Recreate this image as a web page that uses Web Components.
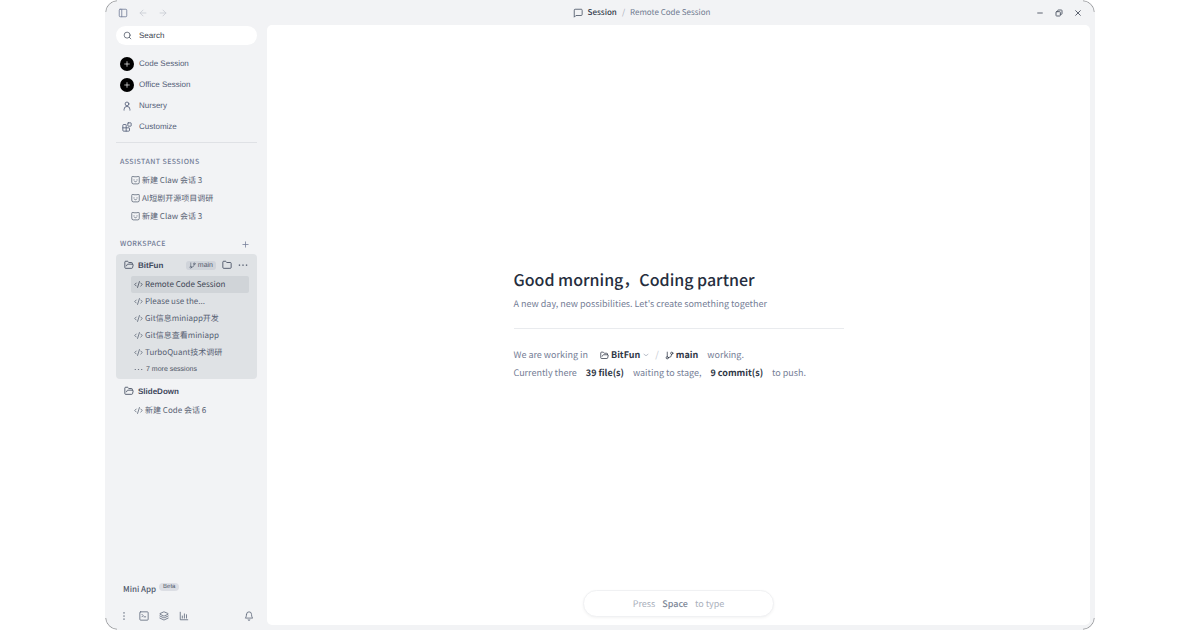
<!DOCTYPE html>
<html lang="en">
<head>
<meta charset="utf-8">
<title>BitFun</title>
<style>
  html, body { margin: 0; height: 100%; background: #fff; }
  body { font-family: "Noto Sans CJK SC", "Noto Sans", sans-serif; color: #5f6980; text-rendering: geometricPrecision; }
</style>
</head>
<body>
<app-window></app-window>
<script>
const ICONS = {
  panel: '<rect x="3" y="3" width="18" height="18" rx="2"/><path d="M9 3v18"/>',
  back: '<path d="M12 19l-7-7 7-7M19 12H5"/>',
  forward: '<path d="M5 12h14M12 5l7 7-7 7"/>',
  search: '<circle cx="11" cy="11" r="8"/><path d="M21 21l-4.3-4.3"/>',
  user: '<circle cx="12" cy="7" r="4.5"/><path d="M5 22v-2a7 7 0 0 1 14 0v2"/>',
  blocks: '<path d="M10 22V7a1 1 0 0 0-1-1H4a2 2 0 0 0-2 2v12a2 2 0 0 0 2 2h12a2 2 0 0 0 2-2v-5a1 1 0 0 0-1-1H2"/><rect x="14" y="2" width="8" height="8" rx="1"/>',
  plus: '<path d="M5 12h14M12 5v14"/>',
  claw: '<path d="M2 3q0-3 3-2l3 1h8l3-1q3-1 3 2v14q0 4-4 4H6q-4 0-4-4z"/><path d="M8 10v1M16 10v1M10 15q2 1 4 0"/>',
  folderOpen: '<path d="M6 14l1.5-2.9A2 2 0 0 1 9.2 10H20a2 2 0 0 1 1.9 2.5l-1.5 6a2 2 0 0 1-2 1.5H4a2 2 0 0 1-2-2V5a2 2 0 0 1 2-2h3.900a2 2 0 0 1 1.700.900l.8 1.200a2 2 0 0 0 1.700.900H18a2 2 0 0 1 2 2v2"/>',
  folder: '<path d="M20 20a2 2 0 0 0 2-2V8a2 2 0 0 0-2-2h-7.900a2 2 0 0 1-1.700-.900L9.600 3.900A2 2 0 0 0 7.900 3H4a2 2 0 0 0-2 2v13a2 2 0 0 0 2 2z"/>',
  branch: '<path d="M6 3v12"/><circle cx="18" cy="6" r="3"/><circle cx="6" cy="18" r="3"/><path d="M18 9a9 9 0 0 1-9 9"/>',
  more: '<path d="M3 12h1M11.500 12h1M20 12h1"/>',
  code: '<path d="M18 16l4-4-4-4M6 8l-4 4 4 4M14.500 4l-5 16"/>',
  dots: '<path d="M12 4v1M12 11.500v1M12 19v1"/>',
  terminal: '<rect x="2" y="2" width="20" height="20" rx="2"/><path d="M7 8l3 3-3 3M12 14h4"/>',
  layers: '<path d="M12.800 2.200a2 2 0 0 0-1.700 0L2.600 6.100a1 1 0 0 0 0 1.800l8.600 3.900a2 2 0 0 0 1.700 0l8.600-3.900a1 1 0 0 0 0-1.800z"/><path d="M22 12l-9.200 4.200a2 2 0 0 1-1.700 0L2 12M22 17l-9.200 4.200a2 2 0 0 1-1.700 0L2 17"/>',
  chart: '<path d="M3 3v18h18M8 17v-5M13 17V7M18 17v-8"/>',
  bell: '<path d="M6 8a6 6 0 0 1 12 0c0 7 3 9 3 9H3s3-2 3-9M10 21a2 2 0 0 0 4 0"/>',
  message: '<path d="M22 16a2 2 0 0 1-2 2H7l-4 4V5a2 2 0 0 1 2-2h15a2 2 0 0 1 2 2z"/>',
  minimize: '<path d="M5 12h14"/>',
  restore: '<rect x="3" y="8" width="13" height="13" rx="2"/><path d="M8 8V5a2 2 0 0 1 2-2h9a2 2 0 0 1 2 2v9a2 2 0 0 1-2 2h-3"/>',
  close: '<path d="M5 5l14 14M19 5L5 19"/>',
  chevron: '<path d="M4 9l8 6 8-6"/>'
};

const BASE = `
  * { box-sizing: border-box; }
  button { font: inherit; color: inherit; text-rendering: inherit; background: none; border: 0; padding: 0; margin: 0; cursor: pointer; text-align: left; white-space: nowrap; display: flex; align-items: center; }
  a { color: inherit; text-decoration: none; white-space: nowrap; }
  h1, h2, p, ul { margin: 0; padding: 0; list-style: none; font-weight: inherit; font-size: inherit; }
`;

function define(name, css, html) {
  customElements.define(name, class extends HTMLElement {
    constructor() {
      super();
      const root = this.attachShadow({ mode: 'open' });
      const template = document.createElement('template');
      template.innerHTML = `<style>${BASE}${css}</style>${typeof html === 'function' ? html(this) : html}`;
      root.append(template.content.cloneNode(true));
    }
  });
}

define('ui-icon', `
  :host { display: inline-flex; flex: none; width: var(--icon, 10px); height: var(--icon, 10px); }
  svg { width: 100%; height: 100%; fill: none; stroke: currentColor; stroke-width: var(--stroke, 2); stroke-linecap: round; stroke-linejoin: round; }
`, el => `<svg viewBox="0 0 24 24" aria-hidden="true">${ICONS[el.getAttribute('name')]}</svg>`);

define('title-bar', `
  :host { display: grid; grid-template-columns: 162px 1fr 79px; align-items: center; height: 25px; }
  .history { display: flex; gap: 10px; padding-left: 13px; color: #c9ccd4; }
  .history button:first-child { color: #76809a; }
  nav { display: flex; justify-content: center; align-items: center; gap: 5px; font-size: 8px; line-height: 15px; color: #6f7a90; white-space: nowrap; }
  nav b { font-weight: 500; color: #333b4a; }
  nav i { font-style: normal; color: #a4aab6; }
  nav ui-icon { color: #4c5566; }
  .controls { display: flex; justify-content: flex-end; gap: 11px; padding-right: 13px; color: #5c6370; --icon: 8px; --stroke: 3; }
`, `
  <div class="history">
    <button aria-label="Toggle sidebar"><ui-icon name="panel"></ui-icon></button>
    <button aria-label="Back"><ui-icon name="back"></ui-icon></button>
    <button aria-label="Forward"><ui-icon name="forward"></ui-icon></button>
  </div>
  <nav aria-label="Location"><ui-icon name="message"></ui-icon><b>Session</b><i>/</i><a href="#session">Remote Code Session</a></nav>
  <div class="controls">
    <button aria-label="Minimize"><ui-icon name="minimize"></ui-icon></button>
    <button aria-label="Restore"><ui-icon name="restore"></ui-icon></button>
    <button aria-label="Close"><ui-icon name="close"></ui-icon></button>
  </div>
`);

define('search-box', `
  :host { display: block; }
  label { display: flex; align-items: center; gap: 7px; height: 19px; padding-left: 7px; border-radius: 10px; background: #fff; color: #4b5362; --icon: 9px; }
  input { flex: 1; min-width: 0; height: 19px; padding: 0; border: 0; outline: 0; background: none; font: 8px "Liberation Sans", sans-serif; color: #3d4451; text-rendering: inherit; }
  input::placeholder { color: #3d4451; opacity: 1; }
`, `<label><ui-icon name="search"></ui-icon><input type="search" placeholder="Search" aria-label="Search"></label>`);

define('nav-item', `
  :host { display: block; font: 8px "Liberation Sans", sans-serif; color: #525d77; }
  button { gap: 5px; height: 21px; width: 100%; }
  .mark { display: flex; align-items: center; justify-content: center; width: 14px; height: 14px; border-radius: 7px; }
  :host([create]) .mark { background: #000; color: #fff; --icon: 8px; }
`, el => `<button><span class="mark"><ui-icon name="${el.getAttribute('icon')}"></ui-icon></span><slot></slot></button>`);

define('session-item', `
  :host { display: block; font-size: 8px; line-height: 15px; color: #566072; --icon: 9px; }
  a { display: flex; align-items: center; gap: 2px; height: var(--row, 17px); padding-left: 3px; }
  :host([active]) a { background: #d0d4d8; color: #3d4655; border-radius: 2px; }
`, el => `<a href="#session"><ui-icon name="${el.getAttribute('icon') || 'code'}"></ui-icon><slot></slot></a>`);

define('section-label', `
  :host { display: flex; align-items: center; justify-content: space-between; height: 16px; padding: 0 7px 0 4px; font-size: 7px; line-height: 16px; font-weight: 500; letter-spacing: 0.06em; color: #717b96; --icon: 9px; }
  h2 { white-space: nowrap; }
`, `<h2><slot></slot></h2><slot name="action"></slot>`);

define('workspace-group', `
  :host { display: block; border-radius: 4px; padding-bottom: 2px; }
  :host([open]) { background: #dfe2e5; }
  header { display: flex; align-items: center; gap: 4px; height: 22px; padding: 0 9px 0 8px; font: bold 8px "Liberation Sans", sans-serif; color: #3e485c; }
  .tools { display: flex; align-items: center; gap: 6px; margin-left: auto; font-weight: normal; }
  .list { padding: 0 8px 0 15px; }
`, `<header><ui-icon name="folderOpen"></ui-icon><slot name="name"></slot><div class="tools"><slot name="tools"></slot></div></header><div class="list"><slot></slot></div>`);

define('branch-tag', `
  :host { display: flex; align-items: center; gap: 2px; height: 9px; padding: 0 3px; border-radius: 3px; background: #d0d4da; font: 7px "Liberation Sans", sans-serif; color: #505a6d; --icon: 7px; }
`, `<ui-icon name="branch"></ui-icon><slot></slot>`);

define('more-sessions', `
  :host { display: block; font: 7px "Liberation Sans", sans-serif; color: #4b5364; --icon: 9px; --stroke: 2; }
  button { gap: 3px; height: 16px; padding-left: 3px; }
`, `<button><ui-icon name="more"></ui-icon><slot></slot></button>`);

define('side-bar', `
  :host { display: flex; flex-direction: column; padding: 1px 10px 4px 11px; }
  .nav { padding: 8px 0 5px 4px; border-bottom: 1px solid #dfe1e5; margin-bottom: 11px; }
  .assistants { --row: 18px; padding: 1px 0 11px 12px; }
  .workspace { margin-bottom: 2px; }
  .later { margin-top: 1px; }
  .bottom { margin-top: auto; }
  .mini { gap: 3px; padding-left: 7px; font-size: 8px; line-height: 16px; font-weight: 500; color: #4f586b; margin-bottom: 8px; }
  .mini small { font: 6px "Liberation Sans", sans-serif; line-height: 8px; padding: 0 4px; border-radius: 4px; background: #dcdee4; margin-bottom: 6px; }
  .tools { display: flex; gap: 10px; padding: 0 3px; height: 20px; color: #626b7d; }
  .tools button:last-child { margin-left: auto; }
`, `
  <search-box></search-box>
  <nav class="nav">
    <nav-item icon="plus" create>Code Session</nav-item>
    <nav-item icon="plus" create>Office Session</nav-item>
    <nav-item icon="user">Nursery</nav-item>
    <nav-item icon="blocks">Customize</nav-item>
  </nav>
  <section-label>ASSISTANT SESSIONS</section-label>
  <div class="assistants">
    <session-item icon="claw">新建 Claw 会话 3</session-item>
    <session-item icon="claw">AI短剧开源项目调研</session-item>
    <session-item icon="claw">新建 Claw 会话 3</session-item>
  </div>
  <section-label class="workspace">WORKSPACE<button slot="action" aria-label="Add workspace"><ui-icon name="plus"></ui-icon></button></section-label>
  <workspace-group open>
    <span slot="name">BitFun</span>
    <branch-tag slot="tools">main</branch-tag>
    <button slot="tools" aria-label="Files"><ui-icon name="folder"></ui-icon></button>
    <button slot="tools" aria-label="More"><ui-icon name="more" style="--stroke: 3"></ui-icon></button>
    <session-item active>Remote Code Session</session-item>
    <session-item>Please use the...</session-item>
    <session-item>Git信息miniapp开发</session-item>
    <session-item>Git信息查看miniapp</session-item>
    <session-item>TurboQuant技术调研</session-item>
    <more-sessions>7 more sessions</more-sessions>
  </workspace-group>
  <workspace-group class="later">
    <span slot="name">SlideDown</span>
    <session-item>新建 Code 会话 6</session-item>
  </workspace-group>
  <div class="bottom">
    <button class="mini">Mini App<small>Beta</small></button>
    <div class="tools">
      <button aria-label="Menu"><ui-icon name="dots" style="--stroke: 3"></ui-icon></button>
      <button aria-label="Terminal"><ui-icon name="terminal"></ui-icon></button>
      <button aria-label="Layers"><ui-icon name="layers"></ui-icon></button>
      <button aria-label="Statistics"><ui-icon name="chart"></ui-icon></button>
      <button aria-label="Notifications"><ui-icon name="bell"></ui-icon></button>
    </div>
  </div>
`);

define('welcome-panel', `
  :host { display: block; width: 330px; font-size: 9px; line-height: 18px; color: #757e96; white-space: nowrap; }
  h1 { font-size: 16px; line-height: 26px; font-weight: 500; color: #252d3d; }
  .lead { padding: 3px 0 15px; border-bottom: 1px solid #e9ebee; margin-bottom: 17px; }
  p { display: flex; align-items: center; gap: 9px; }
  b, button { font-weight: 700; color: #2f3746; }
  button { gap: 2px; --icon: 9px; }
  .place { display: flex; align-items: center; gap: 6px; padding-left: 3px; }
  .place i { font-style: normal; color: #c4c8d0; }
  .place .down { --icon: 6px; --stroke: 3; color: #a4abb9; margin-left: 1px; }
`, `
  <h1>Good morning，Coding partner</h1>
  <div class="lead">A new day, new possibilities. Let's create something together</div>
  <p>We are working in <span class="place"><button><ui-icon name="folderOpen"></ui-icon>BitFun<ui-icon class="down" name="chevron"></ui-icon></button><i>/</i><button><ui-icon name="branch"></ui-icon>main</button></span> working.</p>
  <p>Currently there <b>39 file(s)</b> waiting to stage, <b>9 commit(s)</b> to push.</p>
`);

define('type-prompt', `
  :host { display: block; }
  button { justify-content: center; gap: 7px; width: 191px; height: 27px; border: 1px solid #f0f1f3; border-radius: 14px; background: #fff; box-shadow: 0 1px 3px #0000000d; font-size: 9px; color: #aab0bc; }
  kbd { font: inherit; font-weight: 500; color: #7d8797; }
`, `<button>Press <kbd>Space</kbd> to type</button>`);

define('app-window', `
  :host { display: flex; flex-direction: column; position: relative; height: 100vh; min-height: 560px; margin: 0 auto; width: 82.5%; overflow: hidden; background: #f2f3f5; border-radius: 13px; }
  :host::after {
    content: ""; position: absolute; inset: 0; box-sizing: border-box; pointer-events: none;
    border: 1px solid #9a9b9d; border-radius: 13px;
    --c: linear-gradient(#000 0 0) no-repeat;
    mask: var(--c) 0 0 / 12px 12px, var(--c) 100% 0 / 12px 12px, var(--c) 0 100% / 12px 12px, var(--c) 100% 100% / 12px 12px;
    mask-repeat: no-repeat;
  }
  .body { flex: 1; display: grid; grid-template-columns: 162px 1fr; min-height: 0; }
  main { display: flex; flex-direction: column; align-items: center; margin: 0 5px 5px 0; padding: 33px 0 8px; border-radius: 5px; background: #fff; }
  welcome-panel { margin: auto 0; }
`, `
  <title-bar></title-bar>
  <div class="body">
    <side-bar></side-bar>
    <main><welcome-panel></welcome-panel><type-prompt></type-prompt></main>
  </div>
`);
</script>
</body>
</html>
